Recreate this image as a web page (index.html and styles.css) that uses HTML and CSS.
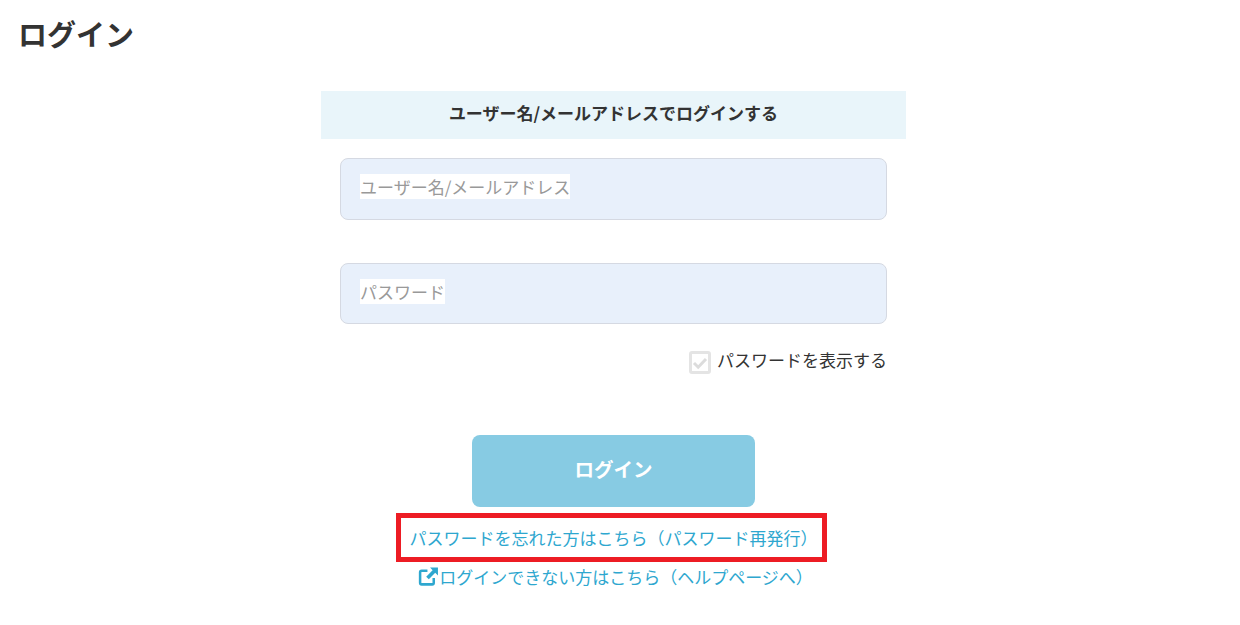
FILE: index.html
```html
<!DOCTYPE html>
<html lang="ja">
<head>
  <meta charset="UTF-8" />
  <meta name="viewport" content="width=device-width, initial-scale=1.0" />
  <title>ログイン</title>
  <link rel="stylesheet" href="styles.css">
</head>
<body>
  <div class="page">
    <h1 class="page-title">ログイン</h1>
    <form class="login-box">
      <h2 class="login-head">ユーザー名/メールアドレスでログインする</h2>
      <div class="fields">
        <input class="text-input" type="text" placeholder="ユーザー名/メールアドレス" />
        <input class="text-input" type="text" placeholder="パスワード" />
        <label class="show-pass">
          <span class="check-box">
            <svg viewBox="0 0 16 16" width="16" height="16"><path d="M2 8 L6.2 12.2 L14 4" fill="none" stroke="#dcdcdc" stroke-width="3"/></svg>
          </span>
          パスワードを表示する
        </label>
      </div>
      <button class="login-btn" type="button">ログイン</button>
      <div class="links">
        <a class="link link-forgot" href="#">パスワードを忘れた方はこちら（パスワード再発行）</a>
        <a class="link link-help" href="#">
          <svg class="ext-icon" viewBox="0 0 20 20" width="21" height="21"><path d="M15 11.5 V16 A1.5 1.5 0 0 1 13.5 17.5 H3.5 A1.5 1.5 0 0 1 2 16 V6 A1.5 1.5 0 0 1 3.5 4.5 H9" fill="none" stroke="#2ea7cf" stroke-width="2.4"/><path d="M11.5 1.5 H19 V9 L16.4 6.5 L10.3 12.7 L7.8 10.2 L13.9 4 Z" fill="#2ea7cf"/></svg>ログインできない方はこちら（ヘルプページへ）</a>
      </div>
    </form>
  </div>
</body>
</html>
```

FILE: styles.css
```css
*, *::after {
  box-sizing: border-box;
}
body {
  margin: 0;
  background: #fff;
  color: #333;
  font-family: "Noto Sans CJK JP", "Noto Sans", sans-serif;
  font-size: 17px;
}
.page {
  width: 1227px;
  padding: 12px 18px 0;
}
.page-title {
  margin: 0;
  font-size: 29px;
  line-height: 42px;
  font-weight: 700;
}
.login-box {
  width: 585px;
  margin: 37px auto 0;
}
.login-head {
  margin: 0;
  height: 48px;
  background: #e9f5fa;
  font-size: 17px;
  font-weight: 700;
  line-height: 44px;
  text-align: center;
}
.fields {
  display: flex;
  flex-direction: column;
  padding: 19px 19px 0;
}
.text-input {
  height: 62px;
  padding: 0 19px 5px;
  margin-bottom: 43px;
  background: #e8f0fb;
  border: 1px solid #d5d9e2;
  border-radius: 8px;
  font: inherit;
  outline: none;
}
.text-input::placeholder {
  color: #999;
  opacity: 1;
  background: #fff;
  width: fit-content;
  line-height: 17px;
}
.text-input + .text-input {
  margin-bottom: 0;
  height: 61px;
}
.show-pass {
  display: flex;
  justify-content: flex-end;
  align-items: flex-start;
  gap: 6px;
  margin-top: 24px;
  line-height: 24px;
}
.check-box {
  display: flex;
  align-items: center;
  justify-content: center;
  width: 22px;
  height: 23px;
  border: 3px solid #e4e4e4;
  border-radius: 3px;
  margin-top: 3px;
}
.login-btn {
  display: block;
  width: 283px;
  height: 72px;
  margin: 61px auto 0;
  padding: 0 0 6px;
  background: #87cbe3;
  border: none;
  border-radius: 8px;
  color: #fff;
  font: inherit;
  font-size: 19.5px;
  font-weight: 700;
}
.links {
  display: flex;
  flex-direction: column;
  align-items: center;
  margin-top: 18px;
  gap: 14px;
}
.link {
  color: #2ea7cf;
  text-decoration: none;
  line-height: 25px;
  white-space: nowrap;
}
.link-forgot {
  position: relative;
}
/* red marker drawn over the screenshot */
.link-forgot::after {
  content: "";
  position: absolute;
  left: -14px;
  top: -12px;
  width: 431px;
  height: 49px;
  border: 5px solid #ed1c24;
}
.link-help {
  display: flex;
  align-items: center;
}
.ext-icon {
  margin-left: 4px;
}
```
